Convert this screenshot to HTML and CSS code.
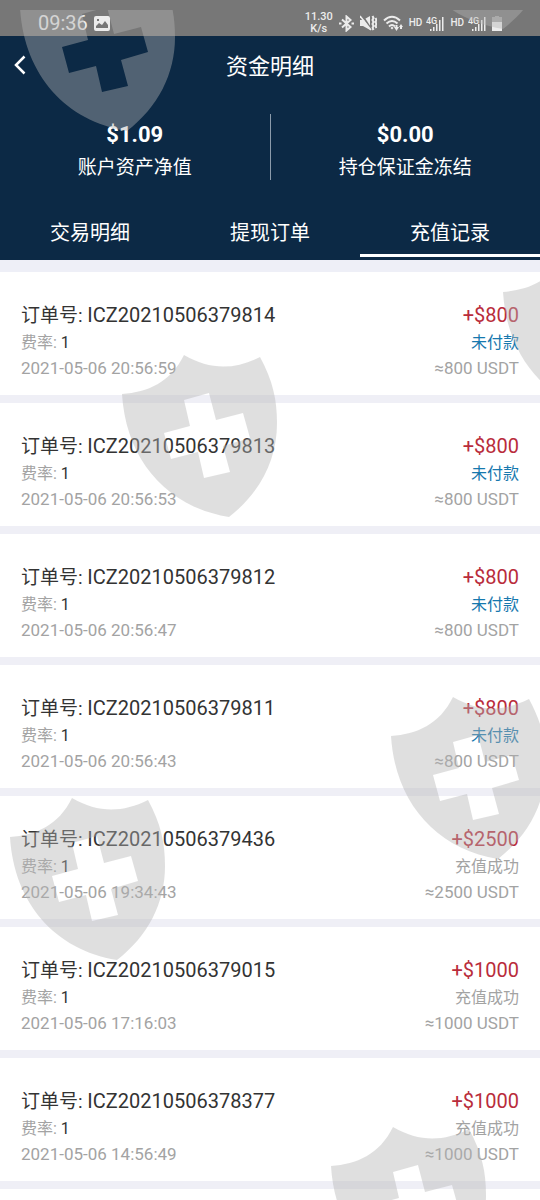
FILE: index.html
```html
<!DOCTYPE html>
<html lang="zh-CN">
<head>
<meta charset="utf-8">
<meta name="viewport" content="width=device-width, initial-scale=1">
<title>资金明细</title>
<link rel="stylesheet" href="styles.css">
</head>
<body>
<svg class="defs" aria-hidden="true">
  <symbol id="shield" viewBox="0 0 156 163">
    <path fill-rule="evenodd" d="M0 39C26 37 48 28 62 0C88 15 112 15 138 2C151 26 155 45 155 68C155 105 138 138 107 162C45 152 4 105 0 39ZM62 45L68 71L42 78L49 104L76 97L82 123L108 117L101 91L128 83L121 58L94 65L87 38Z"/>
  </symbol>
</svg>
<div class="page">
  <header class="top">
    <div class="status">
      <time class="clock">09:36</time>
      <svg class="fill" width="16" height="15" viewBox="0 0 16 15"><path fill-rule="evenodd" d="M2 0h12q2 0 2 2v11q0 2-2 2H2q-2 0-2-2V2q0-2 2-2zM2 12h12V9l-3-4-3 4-3-2-3 3zM3 3v2h2V3z"/></svg>
      <span class="spacer"></span>
      <span class="rate"><span>11.30</span><span>K/s</span></span>
      <svg class="line" width="15" height="17" viewBox="0 0 15 17"><path d="M3 4.500L11.500 12L7.500 15.500V1.500L11.500 5L3 12.500M0 8.500h2.500M12.500 8.500H15"/></svg>
      <svg class="line" width="17" height="16" viewBox="0 0 17 16"><path class="solid" d="M0 5h3l7-4v14l-7-4H0z"/><path d="M12.500 1l1 2-1 2 1 2-1 2 1 2-1 2 1 2M15.500 3l1 2-1 2 1 2-1 2 1 2"/><path class="cut" d="M2 0l9 14"/><path class="thin" d="M0 1l11 14"/></svg>
      <svg class="line" width="20" height="16" viewBox="0 0 20 16"><path d="M1 5.500Q9 -2 17 5.500M3.500 8.500Q9 3.500 14.500 8.500M6 11.500Q9 8.500 12 11.500"/><path class="solid" d="M7.500 13L9 11.500l1.500 1.500L9 14.500zM12.500 12v-2h2v2h1.500l-2.500 4-2.500-4zM16 12l2-3 2 3h-1v2h-2v-2z"/></svg>
      <span class="hd">HD</span>
      <svg class="fill" width="18" height="17" viewBox="0 0 18 17"><path d="M4 14h1.500v2H4zM7 12h1.500v4H7zM10 9h1.500v7H10zM13 5h1.500v11H13zM16 2h1.500v14H16z"/><text x="0" y="9" class="net">4G</text></svg>
      <span class="hd">HD</span>
      <svg class="fill" width="18" height="17" viewBox="0 0 18 17"><path d="M4 14h1.500v2H4zM7 12h1.500v4H7zM10 9h1.500v7H10zM13 5h1.500v11H13zM16 2h1.500v14H16z"/><text x="0" y="9" class="net">4G</text></svg>
      <svg class="fill" width="10" height="15" viewBox="0 0 10 15"><path opacity=".4" d="M3 0h4v1h3v5H0V1h3z"/><path d="M0 6h10v9H0z"/></svg>
    </div>
    <div class="titlebar">
      <button class="back" type="button" aria-label="返回"><svg class="chevron" width="12" height="20" viewBox="0 0 12 20"><path d="M10.500 1.500L2 10l8.500 8.500"/></svg></button>
      <h1 class="title">资金明细</h1>
    </div>
    <div class="balances">
      <div class="balance"><strong class="value">$1.09</strong><span class="caption">账户资产净值</span></div>
      <div class="balance"><strong class="value">$0.00</strong><span class="caption">持仓保证金冻结</span></div>
    </div>
    <nav class="tabs">
      <button class="tab" type="button">交易明细</button>
      <button class="tab" type="button">提现订单</button>
      <button class="tab active" type="button" aria-current="page">充值记录</button>
    </nav>
  </header>
  <main class="orders">
    <article class="order">
      <div class="row head"><h2 class="number"><span class="label">订单号: </span>ICZ20210506379814</h2><span class="amount">+$800</span></div>
      <div class="row fee"><span>费率: <b class="dark">1</b></span><span class="unpaid">未付款</span></div>
      <div class="row meta"><time>2021-05-06 20:56:59</time><span>≈800 USDT</span></div>
    </article>
    <article class="order">
      <div class="row head"><h2 class="number"><span class="label">订单号: </span>ICZ20210506379813</h2><span class="amount">+$800</span></div>
      <div class="row fee"><span>费率: <b class="dark">1</b></span><span class="unpaid">未付款</span></div>
      <div class="row meta"><time>2021-05-06 20:56:53</time><span>≈800 USDT</span></div>
    </article>
    <article class="order">
      <div class="row head"><h2 class="number"><span class="label">订单号: </span>ICZ20210506379812</h2><span class="amount">+$800</span></div>
      <div class="row fee"><span>费率: <b class="dark">1</b></span><span class="unpaid">未付款</span></div>
      <div class="row meta"><time>2021-05-06 20:56:47</time><span>≈800 USDT</span></div>
    </article>
    <article class="order">
      <div class="row head"><h2 class="number"><span class="label">订单号: </span>ICZ20210506379811</h2><span class="amount">+$800</span></div>
      <div class="row fee"><span>费率: <b class="dark">1</b></span><span class="unpaid">未付款</span></div>
      <div class="row meta"><time>2021-05-06 20:56:43</time><span>≈800 USDT</span></div>
    </article>
    <article class="order">
      <div class="row head"><h2 class="number"><span class="label">订单号: </span>ICZ20210506379436</h2><span class="amount">+$2500</span></div>
      <div class="row fee"><span>费率: <b class="dark">1</b></span><span>充值成功</span></div>
      <div class="row meta"><time>2021-05-06 19:34:43</time><span>≈2500 USDT</span></div>
    </article>
    <article class="order">
      <div class="row head"><h2 class="number"><span class="label">订单号: </span>ICZ20210506379015</h2><span class="amount">+$1000</span></div>
      <div class="row fee"><span>费率: <b class="dark">1</b></span><span>充值成功</span></div>
      <div class="row meta"><time>2021-05-06 17:16:03</time><span>≈1000 USDT</span></div>
    </article>
    <article class="order">
      <div class="row head"><h2 class="number"><span class="label">订单号: </span>ICZ20210506378377</h2><span class="amount">+$1000</span></div>
      <div class="row fee"><span>费率: <b class="dark">1</b></span><span>充值成功</span></div>
      <div class="row meta"><time>2021-05-06 14:56:49</time><span>≈1000 USDT</span></div>
    </article>
  </main>
  <div class="watermarks" aria-hidden="true">
    <svg class="mark mark-1"><use href="#shield"/></svg>
    <svg class="mark mark-2"><use href="#shield"/></svg>
    <svg class="mark mark-3"><use href="#shield"/></svg>
    <svg class="mark mark-4"><use href="#shield"/></svg>
    <svg class="mark mark-5"><use href="#shield"/></svg>
    <svg class="mark mark-6"><use href="#shield"/></svg>
    <svg class="mark mark-7"><use href="#shield"/></svg>
  </div>
</div>
</body>
</html>
```
FILE: styles.css
```css
* { box-sizing: border-box; }
body {
  margin: 0;
  background: #fff;
  font-family: Roboto, "Noto Sans CJK SC", sans-serif;
  color: #333;
}
h1, h2 { margin: 0; font-weight: 400; }
button { border: 0; padding: 0; background: none; color: inherit; font: inherit; }
.defs { position: absolute; width: 0; height: 0; }
.page { position: relative; min-height: 100vh; overflow: hidden; }

.top { background: #0c2945; color: #fff; }
.status {
  display: flex;
  align-items: center;
  gap: 6px;
  height: 36px;
  padding: 10px 38px 0 38px;
  background: #777;
  color: #ececec;
}
.spacer { flex: 1; }
.clock { font-size: 20px; line-height: 26px; }
.rate {
  display: flex;
  flex-direction: column;
  align-items: center;
  font-size: 11px;
  line-height: 12px;
  font-weight: 500;
}
.hd { margin-right: -2px; font-size: 10px; line-height: 16px; font-weight: 500; }
.net { font: 500 9px Roboto, sans-serif; }
.fill { fill: #ececec; }
.line { fill: none; stroke: #ececec; stroke-width: 2; }
.solid { fill: #ececec; stroke: none; }
.cut { stroke: #777; }
.thin { stroke-width: 1.5; }

.titlebar { position: relative; padding: 15px 16px 13px; text-align: center; }
.back { position: absolute; left: 14px; top: 19px; height: 20px; }
.chevron { display: block; fill: none; stroke: #fff; stroke-width: 2.5; }
.title { font-size: 22px; line-height: 32px; }

.balances { display: flex; padding: 18px 0; }
.balance {
  flex: 1;
  display: flex;
  flex-direction: column;
  align-items: center;
  padding-top: 8px;
}
.balance + .balance { border-left: 1px solid #8c9bab; }
.value { font-size: 22px; line-height: 26px; font-weight: 700; }
.caption { font-size: 19px; line-height: 24px; padding-top: 8px; }

.tabs { display: flex; padding: 14px 0 3px; }
.tab { flex: 1; font-size: 20px; line-height: 42px; border-bottom: 3px solid transparent; }
.active { border-bottom-color: #fff; }

.orders { padding-top: 12px; background: linear-gradient(#eeeff7, #eeeff7) no-repeat 0 0 / 100% 12px; }
.order { padding: 29px 21px 15px; border-bottom: 8px solid #efeff6; }
.row { display: flex; justify-content: space-between; }
.head { font-size: 20px; line-height: 28px; }
.number { font-size: 20px; }
.label { font-size: 19px; line-height: 20px; }
.amount { color: #b92c3b; }
.fee { font-size: 16px; line-height: 27px; color: #a3a3a3; }
.dark { font-weight: 400; color: #333; }
.unpaid { color: #1678ae; }
.meta { font-size: 17px; line-height: 24px; color: #a3a3a3; }

.watermarks { position: absolute; inset: 10px 0 0; overflow: hidden; pointer-events: none; }
.mark { position: absolute; width: 156px; height: 163px; fill: rgba(178, 178, 178, 0.42); }
.mark-1 { left: 20px; top: -41px; }
.mark-2 { left: 396px; top: -143px; }
.mark-3 { left: 503px; top: 243px; }
.mark-4 { left: 122px; top: 345px; }
.mark-5 { left: 391px; top: 687px; }
.mark-6 { left: 10px; top: 788px; }
.mark-7 { left: 331px; top: 1117px; }
```
